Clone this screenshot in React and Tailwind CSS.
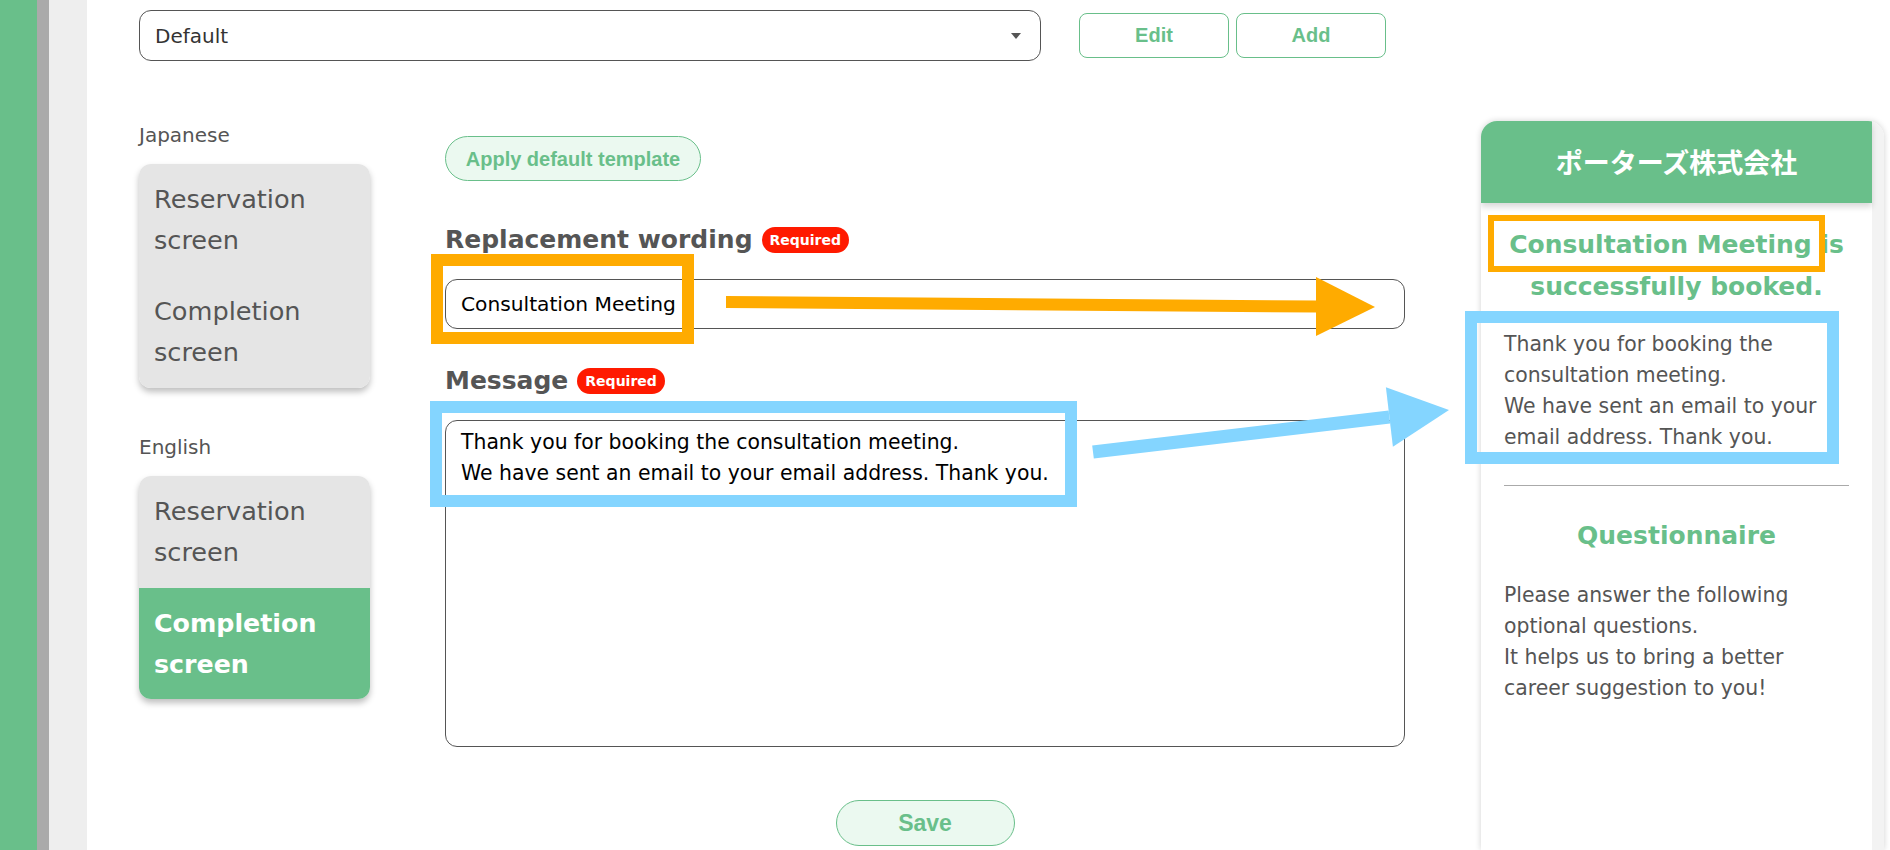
export default function App() {
  return (
    <div className="relative w-[1890px] h-[850px] overflow-hidden bg-white flex font-['DejaVu_Sans',sans-serif]">
      <div className="w-[37px] shrink-0 bg-[#69bf8a]" />
      <div className="w-[12px] shrink-0 bg-[#aaaaaa]" />
      <div className="w-[38px] shrink-0 bg-[#eeeeee]" />
      <div className="flex-1 flex flex-col">
        {/* top row */}
        <div className="flex items-center pl-[52px] pt-[10px] h-[61px]">
          <div className="w-[902px] h-[51px] border border-[#555] rounded-[12px] flex items-center justify-between pl-[15px] pr-[19px] text-[20px] text-[#333]">
            <span>Default</span>
            <svg width="10" height="6" viewBox="0 0 10 6"><path d="M0 0 L10 0 L5 6 Z" fill="#555" /></svg>
          </div>
          <button className="ml-[38px] w-[150px] h-[45px] rounded-[8px] border border-[#69bf8a] bg-white text-[#69bf8a] font-['Liberation_Sans',sans-serif] font-bold text-[20px] leading-[43px]">Edit</button>
          <button className="ml-[7px] w-[150px] h-[45px] rounded-[8px] border border-[#69bf8a] bg-white text-[#69bf8a] font-['Liberation_Sans',sans-serif] font-bold text-[20px] leading-[43px]">Add</button>
        </div>
        {/* lower area */}
        <div className="flex flex-1 mt-[39px]">
          {/* sidebar */}
          <div className="ml-[52px] w-[231px] shrink-0 pt-[23px]">
            <div className="text-[20px] leading-[24px] text-[#555]">Japanese</div>
            <div className="mt-[17px] rounded-[12px] overflow-hidden shadow-[0_4px_6px_rgba(0,0,0,0.25)]">
              <div className="h-[112px] bg-[#e5e5e5] px-[15px] py-[15px] text-[25.6px] leading-[41px] text-[#555]">Reservation<br />screen</div>
              <div className="h-[112px] bg-[#e5e5e5] px-[15px] py-[15px] text-[25.6px] leading-[41px] text-[#555]">Completion<br />screen</div>
            </div>
            <div className="mt-[47px] text-[20px] leading-[24px] text-[#555]">English</div>
            <div className="mt-[17px] rounded-[12px] overflow-hidden shadow-[0_4px_6px_rgba(0,0,0,0.25)]">
              <div className="h-[112px] bg-[#e5e5e5] px-[15px] py-[15px] text-[25.6px] leading-[41px] text-[#555]">Reservation<br />screen</div>
              <div className="h-[111px] bg-[#69bf8a] px-[15px] py-[15px] text-[25.3px] leading-[41px] text-white font-bold">Completion<br />screen</div>
            </div>
          </div>
          {/* form */}
          <div className="ml-[75px] w-[960px] shrink-0 flex flex-col">
            <button className="mt-[36px] w-[256px] h-[45px] rounded-full border border-[#69bf8a] bg-[#ebf9f0] text-[#69bf8a] font-['Liberation_Sans',sans-serif] font-bold text-[20px]">Apply default template</button>
            <div className="mt-[42px] h-[34px] flex items-center">
              <span className="text-[25px] font-bold text-[#555]">Replacement wording</span>
              <span className="ml-[9px] h-[26px] px-[8px] rounded-full bg-[#ff1a00] text-white text-[14px] font-bold flex items-center">Required</span>
            </div>
            <div className="mt-[22px] h-[50px] border border-[#555] rounded-[12px] flex items-center px-[15px] text-[20.2px] text-black">Consultation Meeting</div>
            <div className="mt-[35px] h-[34px] flex items-center">
              <span className="text-[25px] font-bold text-[#555]">Message</span>
              <span className="ml-[9px] h-[26px] px-[8px] rounded-full bg-[#ff1a00] text-white text-[14px] font-bold flex items-center">Required</span>
            </div>
            <div className="mt-[22px] h-[327px] border border-[#555] rounded-[12px] px-[15px] pt-[6px] text-[20.4px] leading-[31px] text-black">
              Thank you for booking the consultation meeting.<br />
              We have sent an email to your email address. Thank you.
            </div>
            <button className="mt-[53px] self-center w-[179px] h-[46px] rounded-full border border-[#69bf8a] bg-[#ebf9f0] text-[#69bf8a] font-['Liberation_Sans',sans-serif] font-bold text-[23px]">Save</button>
          </div>
          {/* preview */}
          <div className="ml-[76px] mt-[21px] w-[403px] shrink-0 flex rounded-t-[16px] shadow-[0_0_6px_rgba(0,0,0,0.18)] overflow-hidden">
            <div className="w-[391px] bg-white flex flex-col">
              <div className="h-[82px] shrink-0 bg-[#69bf8a] flex items-center justify-center text-white font-bold text-[27px] font-['Noto_Sans_CJK_JP',sans-serif] shadow-[0_4px_6px_rgba(0,0,0,0.15)] relative">ポーターズ株式会社</div>
              <div className="mt-[21px] text-center text-[25px] leading-[42px] font-bold text-[#69bf8a]">Consultation Meeting is<br />successfully booked.</div>
              <div className="mt-[21px] px-[23px] text-[20.4px] leading-[31px] text-[#555] whitespace-nowrap">
                Thank you for booking the<br />consultation meeting.<br />We have sent an email to your<br />email address. Thank you.
              </div>
              <div className="mt-[32px] mx-[23px] h-px bg-[#aaaaaa]" />
              <div className="mt-[29px] text-center text-[25px] leading-[42px] font-bold text-[#69bf8a]">Questionnaire</div>
              <div className="mt-[23px] px-[23px] text-[20.4px] leading-[31px] text-[#555] whitespace-nowrap">
                Please answer the following<br />optional questions.<br />It helps us to bring a better<br />career suggestion to you!
              </div>
            </div>
            <div className="w-[12px] bg-[#f3f3f3]" />
          </div>
        </div>
      </div>
      {/* annotations overlay */}
      <svg className="absolute inset-0 pointer-events-none" width="1890" height="850" viewBox="0 0 1890 850">
        <rect x="437" y="260" width="251" height="78" fill="none" stroke="#ffab00" strokeWidth="12" />
        <rect x="436" y="407" width="635" height="94" fill="none" stroke="#84d5ff" strokeWidth="12" />
        <rect x="1491" y="218" width="331" height="51" fill="none" stroke="#ffab00" strokeWidth="6" />
        <rect x="1471" y="317" width="362" height="141" fill="none" stroke="#84d5ff" strokeWidth="12" />
        <polygon points="726,296 1317,300.5 1317,312.5 726,308" fill="#ffab00" />
        <polygon points="1316,277 1375,307 1316,336" fill="#ffab00" />
        <polygon points="1092.2,445.5 1388.6,410.5 1390.2,423.5 1093.8,458.5" fill="#84d5ff" />
        <polygon points="1385.9,387.2 1449,410 1392.9,446.8" fill="#84d5ff" />
      </svg>
    </div>
  );
}
